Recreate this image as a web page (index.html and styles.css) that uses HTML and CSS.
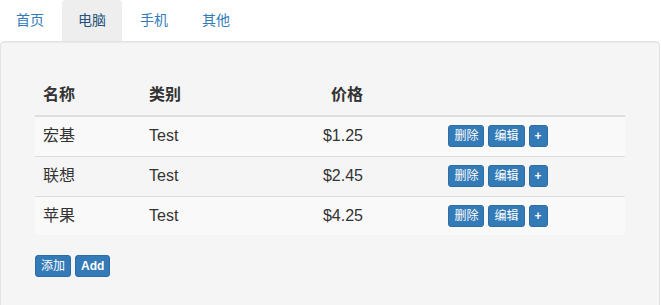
FILE: index.html
```html
<!DOCTYPE html>
<html lang="zh">
<head>
<meta charset="utf-8">
<link rel="stylesheet" href="styles.css">
</head>
<body>
<ul class="tabs">
  <li><a href="#">首页</a></li>
  <li class="active"><a href="#">电脑</a></li>
  <li><a href="#">手机</a></li>
  <li><a href="#">其他</a></li>
</ul>
<div class="well">
  <div class="inner">
    <table class="table">
      <thead>
        <tr><th class="c1">名称</th><th class="c2">类别</th><th class="c3 price">价格</th><th class="c4"></th></tr>
      </thead>
      <tbody>
        <tr class="odd"><td>宏基</td><td>Test</td><td class="price">$1.25</td><td class="ops"><button class="btn">删除</button> <button class="btn">编辑</button> <button class="btn bold">+</button></td></tr>
        <tr><td>联想</td><td>Test</td><td class="price">$2.45</td><td class="ops"><button class="btn">删除</button> <button class="btn">编辑</button> <button class="btn bold">+</button></td></tr>
        <tr class="odd"><td>苹果</td><td>Test</td><td class="price">$4.25</td><td class="ops"><button class="btn">删除</button> <button class="btn">编辑</button> <button class="btn bold">+</button></td></tr>
      </tbody>
    </table>
    <div class="actions"><button class="btn">添加</button> <button class="btn bold">Add</button></div>
  </div>
</div>
</body>
</html>
```
FILE: styles.css
```css
html, body {
  margin: 0;
  padding: 0;
  background: #fff;
}
body {
  font-family: "Liberation Sans", Arial, "Noto Sans CJK SC", sans-serif;
  font-size: 14px;
  line-height: 1.42857;
  color: #333;
  width: 660px;
}
.tabs {
  list-style: none;
  margin: 0;
  padding: 0;
  display: flex;
  height: 41px;
}
.tabs li {
  margin-right: 2px;
}
.tabs a {
  display: block;
  height: 41px;
  box-sizing: border-box;
  padding: 10px 16px 0 16px;
  line-height: 20px;
  font-size: 14px;
  color: #337ab7;
  text-decoration: none;
  border-radius: 4px 4px 0 0;
}
.tabs li.active a {
  background: #eee;
  color: #23527c;
}
.well {
  background: #f5f5f5;
  border: 1px solid #e3e3e3;
  border-radius: 4px;
  box-shadow: inset 0 1px 1px rgba(0,0,0,.05);
  padding: 19px;
  min-height: 300px;
}
.inner {
  padding: 15px;
}
.table {
  width: 100%;
  table-layout: fixed;
  border-collapse: collapse;
  border-spacing: 0;
  margin-bottom: 20px;
  font-size: 16px;
}
.table th, .table td {
  padding: 8px;
  line-height: 1.42857;
  text-align: left;
  vertical-align: top;
  box-sizing: border-box;
}
.table th {
  font-weight: bold;
  border-bottom: 2px solid #ddd;
  vertical-align: bottom;
}
.table td {
  border-top: 1px solid #ddd;
}
.table tbody tr:first-child td {
  border-top: 0;
}
.table tr.odd td {
  background: #f9f9f9;
}
.c1 { width: 106px; }
.c2 { width: 115px; }
.c3 { width: 115px; }
.c4 { width: 254px; }
.table .price { text-align: right; }
.table .ops { text-align: center; vertical-align: middle; font-size: 0; }
.ops .btn { margin: 0 2px; }
.btn {
  display: inline-block;
  vertical-align: middle;
  font-family: "Liberation Sans", Arial, "Noto Sans CJK SC", sans-serif;
  font-size: 12px;
  line-height: 18px;
  padding: 1px 5px;
  border: 1px solid #2e6da4;
  border-radius: 3px;
  background: #337ab7;
  color: #fff;
  margin: 0;
  cursor: pointer;
}
.btn.bold { font-weight: bold; }
.actions { font-size: 0; }
.actions .btn { margin-right: 4px; }
```
